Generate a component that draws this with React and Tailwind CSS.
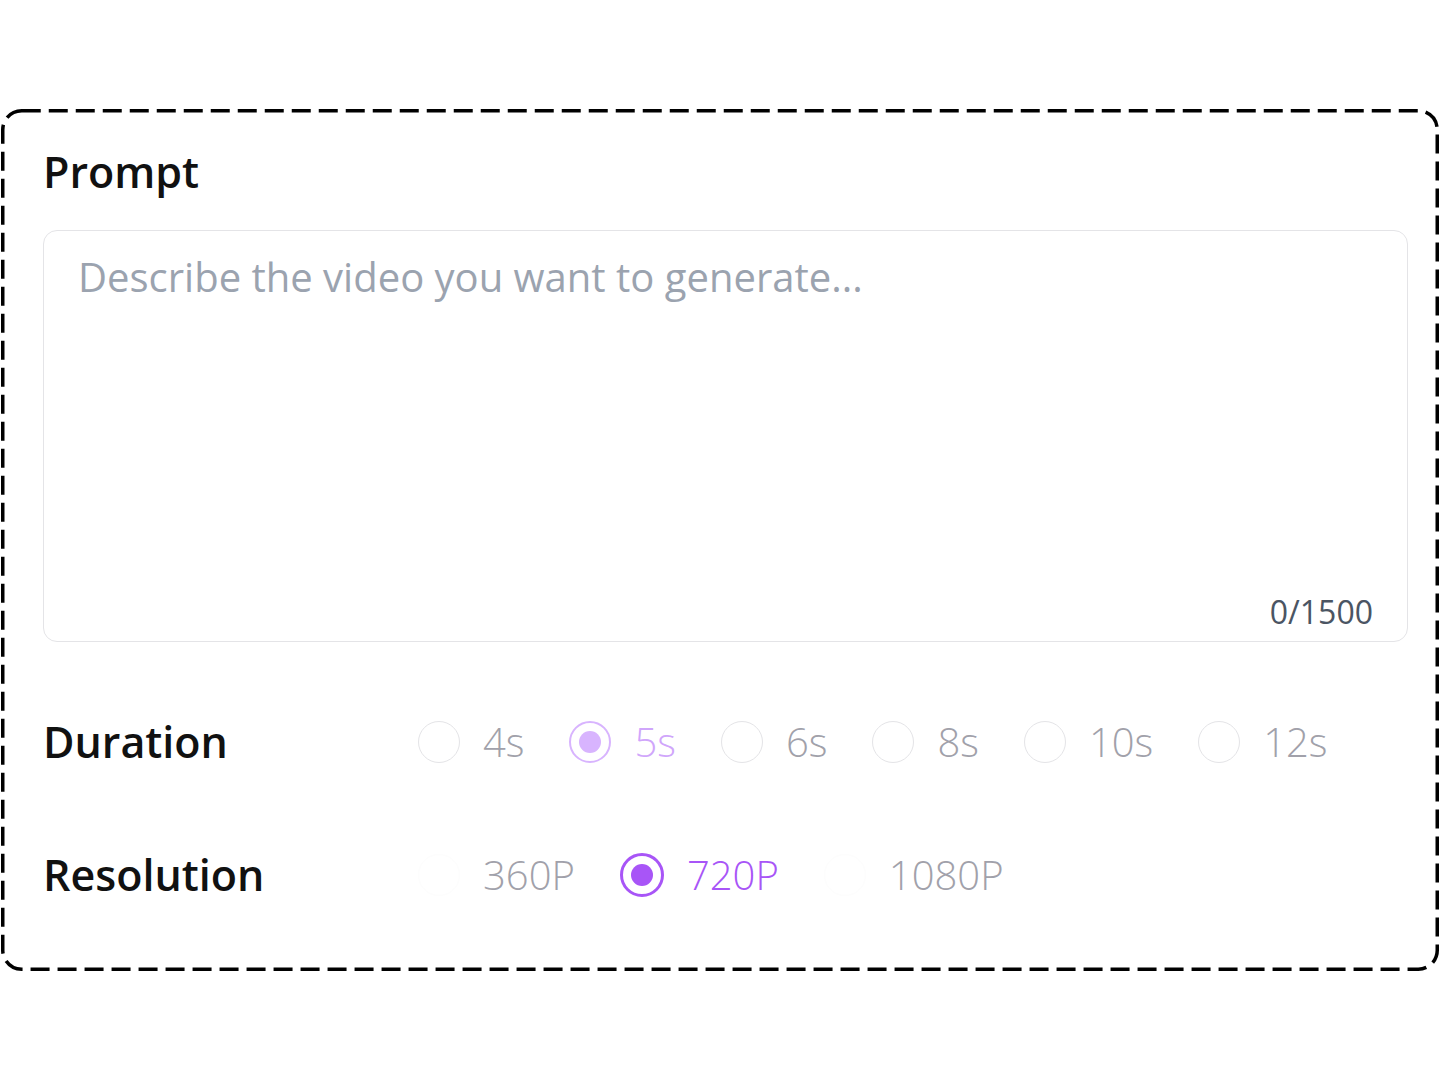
import React from "react";

const font = { fontFamily: '"Open Sans", "Noto Sans", sans-serif' };

function Radio({ state }) {
  if (state === "soft") {
    return (
      <span className="flex h-[42px] w-[42px] shrink-0 items-center justify-center rounded-full border-2 border-[#d8b4fe]">
        <span className="h-[22px] w-[22px] rounded-full bg-[#d8b4fe]" />
      </span>
    );
  }
  if (state === "on") {
    return (
      <span className="flex h-[44px] w-[44px] shrink-0 items-center justify-center rounded-full border-[3px] border-[#a855f7]">
        <span className="h-[22px] w-[22px] rounded-full bg-[#a855f7]" />
      </span>
    );
  }
  if (state === "hidden") {
    return <span className="h-[42px] w-[42px] shrink-0 rounded-full border border-[#fdfdfd]" />;
  }
  return <span className="h-[42px] w-[42px] shrink-0 rounded-full border border-[#e4e4e7]" />;
}

function Option({ label, state }) {
  const color =
    state === "soft" ? "text-[#d0a6fb]" : state === "on" ? "text-[#a855f7]" : "text-[#a1a1aa]";
  return (
    <div className="flex items-center gap-[23px]">
      <Radio state={state} />
      <span className={`text-[40px] leading-none font-light ${color}`}>{label}</span>
    </div>
  );
}

export default function App() {
  return (
    <div className="min-h-[1080px] bg-white pt-[109px] pl-[1px] pr-[1px]" style={font}>
      <div className="relative h-[862px] rounded-[20px] pl-[42px] pr-[31px] pt-[35px]">
        <svg
          className="pointer-events-none absolute inset-0"
          width="1438"
          height="862"
          viewBox="0 0 1438 862"
          fill="none"
        >
          <rect
            x="1.75"
            y="1.75"
            width="1434.5"
            height="858.5"
            rx="19"
            stroke="#000"
            strokeWidth="3.5"
            strokeDasharray="19 8"
          />
        </svg>
        <div className="text-[43px] font-semibold leading-[56px] text-[#111111]">Prompt</div>
        <div className="relative mt-[30px] h-[412px] rounded-[14px] border border-[#e4e4e7]">
          <textarea
            className="h-full w-full resize-none rounded-[14px] bg-transparent px-[34px] pt-[18px] text-[40px] leading-[56px] text-[#333] outline-none placeholder:text-[#9ba3af]"
            placeholder="Describe the video you want to generate..."
            style={font}
          />
          <span className="absolute bottom-[7px] right-[34px] text-[32px] leading-[44px] text-[#4b5563]">
            0/1500
          </span>
        </div>
        <div className="mt-[78px] flex items-center">
          <div className="w-[375px] text-[43px] font-semibold leading-[44px] text-[#111111]">Duration</div>
          <div className="flex items-center gap-[45px]">
            <Option label="4s" />
            <Option label="5s" state="soft" />
            <Option label="6s" />
            <Option label="8s" />
            <Option label="10s" />
            <Option label="12s" />
          </div>
        </div>
        <div className="mt-[89px] flex items-center">
          <div className="w-[375px] text-[43px] font-semibold leading-[44px] text-[#111111]">Resolution</div>
          <div className="flex items-center gap-[45px]">
            <Option label="360P" state="hidden" />
            <Option label="720P" state="on" />
            <Option label="1080P" state="hidden" />
          </div>
        </div>
      </div>
    </div>
  );
}
